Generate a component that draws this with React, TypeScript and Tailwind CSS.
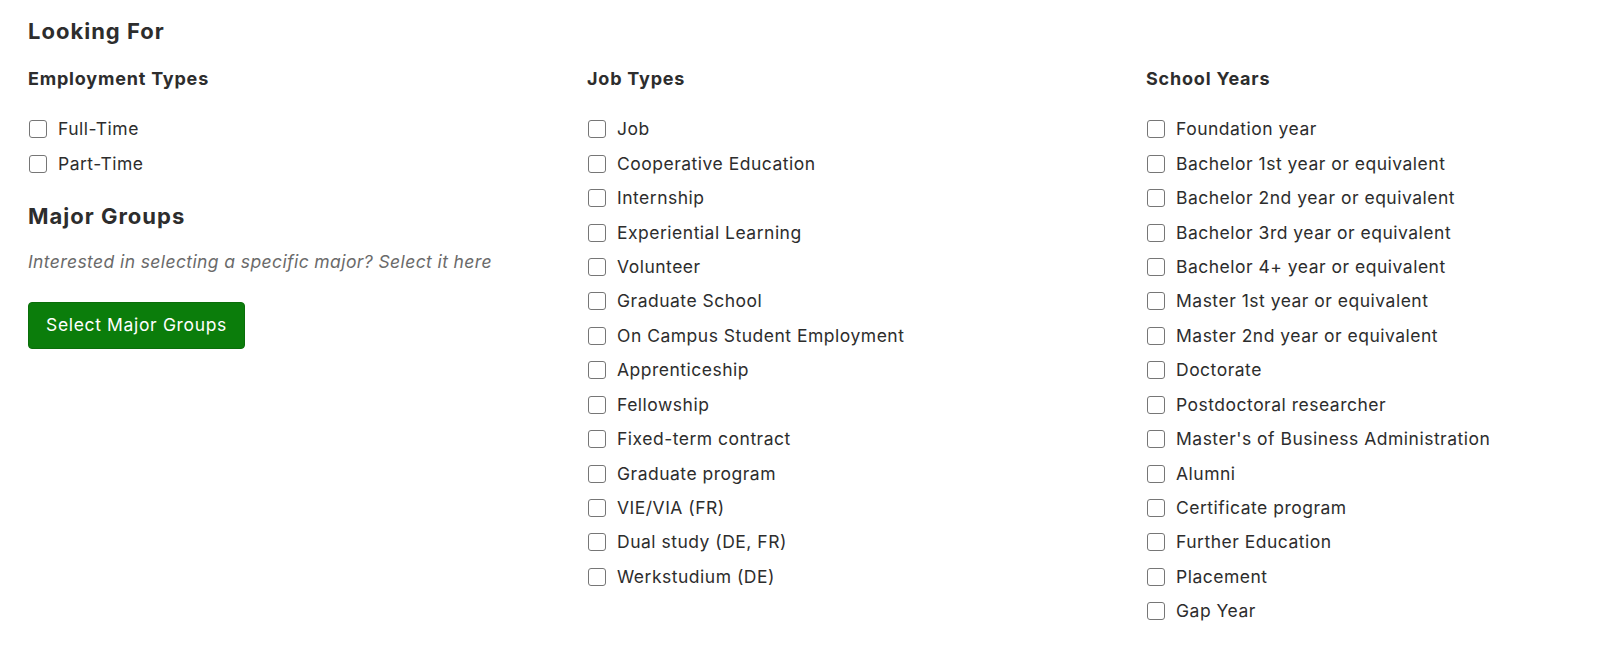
import React from "react";

const employment = ["Full-Time", "Part-Time"];
const jobTypes = [
  "Job",
  "Cooperative Education",
  "Internship",
  "Experiential Learning",
  "Volunteer",
  "Graduate School",
  "On Campus Student Employment",
  "Apprenticeship",
  "Fellowship",
  "Fixed-term contract",
  "Graduate program",
  "VIE/VIA (FR)",
  "Dual study (DE, FR)",
  "Werkstudium (DE)",
];
const schoolYears = [
  "Foundation year",
  "Bachelor 1st year or equivalent",
  "Bachelor 2nd year or equivalent",
  "Bachelor 3rd year or equivalent",
  "Bachelor 4+ year or equivalent",
  "Master 1st year or equivalent",
  "Master 2nd year or equivalent",
  "Doctorate",
  "Postdoctoral researcher",
  "Master's of Business Administration",
  "Alumni",
  "Certificate program",
  "Further Education",
  "Placement",
  "Gap Year",
];

function CheckList({ items }: { items: string[] }) {
  return (
    <div className="mt-[21px] flex flex-col">
      {items.map((t) => (
        <label key={t} className="flex h-[34.45px] items-center">
          <span className="ml-px mr-[11px] h-[18px] w-[18px] shrink-0 rounded-[3px] border-[1.5px] border-[#767676] bg-white" />
          <span className="text-[17.5px] leading-6 tracking-[0.5px] text-[#2d2d2d]">{t}</span>
        </label>
      ))}
    </div>
  );
}

function SubHead({ children }: { children: React.ReactNode }) {
  return (
    <h3 className="mt-[22px] text-[18px] font-bold leading-6 tracking-[0.8px] text-[#2d2d2d]">
      {children}
    </h3>
  );
}

export default function App() {
  return (
    <div
      className="min-h-[667px] bg-white pl-[28px] pt-[17px]"
      style={{ fontFamily: "Inter, 'Noto Sans', sans-serif" }}
    >
      <h2 className="text-[22px] font-bold leading-7 tracking-[1px] text-[#2d2d2d]">Looking For</h2>
      <div className="flex">
        <div className="w-[559px]">
          <SubHead>Employment Types</SubHead>
          <CheckList items={employment} />
          <h2 className="mt-[21px] text-[22px] font-bold leading-7 tracking-[1px] text-[#2d2d2d]">
            Major Groups
          </h2>
          <p className="mt-[20px] text-[17.5px] italic leading-6 tracking-[0.4px] text-[#6a6a6a]">
            Interested in selecting a specific major? Select it here
          </p>
          <button className="mt-[28px] flex h-[47px] w-[217px] items-center justify-center rounded-[4px] border border-[#0a6e0a] bg-[#0b7d0b] text-[17.5px] tracking-[0.65px] text-white">
            Select Major Groups
          </button>
        </div>
        <div className="w-[559px]">
          <SubHead>Job Types</SubHead>
          <CheckList items={jobTypes} />
        </div>
        <div className="w-[420px]">
          <SubHead>School Years</SubHead>
          <CheckList items={schoolYears} />
        </div>
      </div>
    </div>
  );
}
